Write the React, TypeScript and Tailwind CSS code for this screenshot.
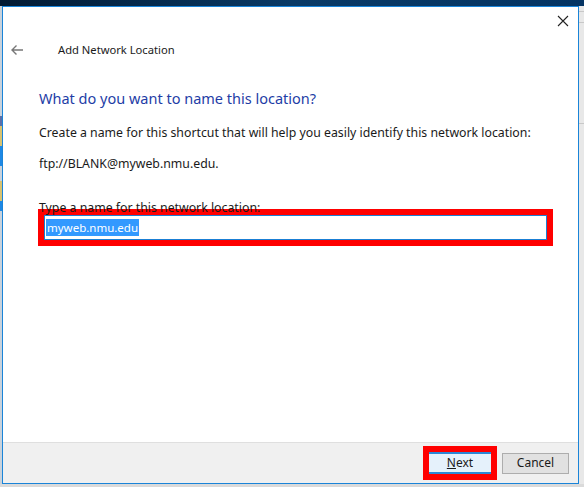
import React from "react";

export default function App() {
  const font = { fontFamily: '"Noto Sans", "Open Sans", sans-serif' };
  return (
    <div className="w-[584px] h-[487px] overflow-hidden bg-[#e4e4e4] flex flex-col" style={font}>
      <div className="h-[6px] bg-gradient-to-r from-[#021a33] via-[#0a3a66] to-[#043463] shrink-0" />
      <div className="flex flex-1 min-h-0">
        <div className="w-[2px] bg-[#c8d2dc] flex flex-col">
          <div className="h-[110px]" />
          <div className="h-[10px] bg-[#5b6fa8]" />
          <div className="h-[20px] bg-[#d8c270]" />
          <div className="h-[20px] bg-[#1e88e5]" />
          <div className="h-[15px]" />
          <div className="h-[20px] bg-[#d8c270]" />
          <div className="h-[10px] bg-[#1e88e5]" />
          <div className="flex-1" />
        </div>
        <div className="w-[577px] h-[478px] border border-[#1a84d8] bg-white flex flex-col">
          <div className="flex-1 relative">
            <div className="absolute right-[9px] top-[8px] w-[12px] h-[12px]">
              <svg width="12" height="12" viewBox="0 0 12 12">
                <path d="M1 1 L11 11 M11 1 L1 11" stroke="#222" strokeWidth="1.1" />
              </svg>
            </div>
            <div className="flex items-center h-[20px] mt-[33px]">
              <div className="w-[55px] pl-[7px]">
                <svg width="14" height="12" viewBox="0 0 14 12">
                  <path d="M13 6 H2 M6.5 1.5 L2 6 L6.5 10.5" stroke="#777" strokeWidth="1.4" fill="none" />
                </svg>
              </div>
              <span className="text-[11.2px] text-[#1a1a1a]">Add Network Location</span>
            </div>
            <div className="pl-[36px] pr-[20px]">
              <div className="mt-[27px] text-[14.5px] leading-[22px] text-[#1e3da6]">What do you want to name this location?</div>
              <div className="mt-[16px] text-[12.3px] leading-[16px] text-[#1a1a1a] whitespace-nowrap">
                Create a name for this shortcut that will help you easily identify this network location:
              </div>
              <div className="mt-[15px] text-[12.3px] leading-[16px] text-[#1a1a1a]">ftp://BLANK@myweb.nmu.edu.</div>
              <div className="mt-[29px] text-[12.3px] leading-[14px] text-[#1a1a1a]">Type a name for this network location:</div>
              <div className="-mt-[6px] -ml-[1px] w-[515px] h-[37px] border-[6px] border-[#ff0000] bg-white">
                <div className="h-full border border-[#1a7fd4] flex items-center pl-[1px]">
                  <span className="bg-[#3399ff] text-white text-[11.5px] leading-[17px] px-[1px]">myweb.nmu.edu</span>
                </div>
              </div>
            </div>
          </div>
          <div className="h-[41px] bg-[#f0f0f0] border-t border-[#dfdfdf] flex items-center justify-end pr-[9px] gap-[5px]">
            <div className="w-[74px] h-[34px] border-[6px] border-[#ff0000] bg-[#f0f0f0] flex items-center justify-center">
              <div className="w-[62px] h-[22px] bg-[#e5f1fb] border-y-[2px] border-[#2b87d6] flex items-center justify-center text-[12px] text-[#1a1a1a]">
                <span><span className="underline">N</span>ext</span>
              </div>
            </div>
            <div className="w-[67px] h-[21px] bg-[#e1e1e1] border border-[#adadad] flex items-center justify-center text-[12px] text-[#1a1a1a]">
              Cancel
            </div>
          </div>
        </div>
        <div className="flex-1 bg-[#e8e8e8] flex flex-col">
          <div className="h-[5px]" />
          <div className="h-px bg-[#c8c8c8]" />
          <div className="h-[10px]" />
          <div className="h-px bg-[#c8c8c8]" />
          <div className="h-[100px]" />
          <div className="h-px bg-[#c8c8c8]" />
        </div>
      </div>
      <div className="h-[3px] bg-[#dadada] shrink-0" />
    </div>
  );
}
